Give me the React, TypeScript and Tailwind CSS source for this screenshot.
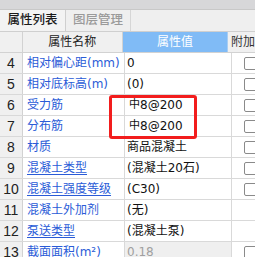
import React from "react";

type Row = { n: number; name: string; value: string; u?: boolean; cb: boolean; disabled?: boolean; steel?: boolean };

const rows: Row[] = [
  { n: 4, name: "相对偏心距(mm)", value: "0", cb: true },
  { n: 5, name: "相对底标高(m)", value: "(0)", cb: true },
  { n: 6, name: "受力筋", value: "8@200", cb: true, steel: true },
  { n: 7, name: "分布筋", value: "8@200", cb: true, steel: true },
  { n: 8, name: "材质", value: "商品混凝土", cb: true },
  { n: 9, name: "混凝土类型", value: "(混凝土20石)", cb: true, u: true },
  { n: 10, name: "混凝土强度等级", value: "(C30)", cb: true, u: true },
  { n: 11, name: "混凝土外加剂", value: "(无)", cb: false },
  { n: 12, name: "泵送类型", value: "(混凝土泵)", cb: false, u: true },
  { n: 13, name: "截面面积(m²)", value: "0.18", cb: true, disabled: true },
];

export default function App() {
  return (
    <div
      className="relative w-[255px] h-[257px] overflow-hidden bg-white text-[12px] leading-none"
      style={{ fontFamily: '"DejaVu Sans", "Noto Sans CJK SC", sans-serif' }}
    >
      <div className="h-[10px] bg-[#d7d7d9] border-b border-[#c8c8c8]" />
      <div className="flex h-[22px] bg-[#efefef] border-b border-[#cfcfcf]">
        <div className="w-[66px] flex items-center justify-center border-r border-[#cfcfcf] text-[#1a1a1a] bg-[#f3f3f3] text-[12.5px] font-medium">
          属性列表
        </div>
        <div className="w-[65px] flex items-center justify-center border-r border-[#d6d6d6] text-[#9a9a9a] text-[12.5px] font-medium">
          图层管理
        </div>
        <div className="flex-1" />
      </div>
      <div className="flex h-[21px] border-b border-[#d2d2d2] bg-[#f0f0f0]">
        <div className="w-[23px] border-r border-[#d2d2d2]" />
        <div className="w-[102px] flex items-center justify-center text-[#222] border-r border-[#d2d2d2]">
          属性名称
        </div>
        <div className="w-[107px] flex items-center justify-center bg-[#80bbf6] text-white border-r border-[#a8cdf2]">
          属性值
        </div>
        <div className="flex-1 flex items-center pl-[3px] text-[#333] whitespace-nowrap">附加</div>
      </div>
      {rows.map((r) => (
        <div key={r.n} className="flex h-[21px] border-b border-[#d9d9d9]">
          <div
            className="w-[23px] shrink-0 flex items-center justify-center bg-[#f0f0f0] border-r border-[#d2d2d2] text-[#222] text-[14px]"
            style={{ fontFamily: '"Liberation Sans", sans-serif' }}
          >
            {r.n}
          </div>
          <div className="w-[102px] shrink-0 flex items-center pl-[4px] border-r border-[#d9d9d9] text-[#2a5bd7] whitespace-nowrap overflow-hidden">
            <span className={r.u ? "underline underline-offset-2" : ""}>{r.name}</span>
          </div>
          <div
            className={
              "w-[107px] shrink-0 flex items-center pl-[2px] border-r border-[#d9d9d9] whitespace-nowrap " +
              (r.disabled ? "bg-[#efefef] text-[#a0a0a0]" : "text-[#111]")
            }
          >
            {r.steel ? (
              <>
                <span className="text-[11px] ml-[2px] relative top-[-1px]">中</span>
                <span>{r.value}</span>
              </>
            ) : (
              r.value
            )}
          </div>
          <div className="flex-1 flex items-center pl-[12px]">
            {r.cb && <div className="w-[14px] h-[13px] shrink-0 border border-[#8a8a8a] rounded-[2px] bg-white" />}
          </div>
        </div>
      ))}
      <div className="absolute left-[109px] top-[95px] w-[88px] h-[44px] border-[3px] border-[#f21d1d] rounded-[3px]" />
    </div>
  );
}
